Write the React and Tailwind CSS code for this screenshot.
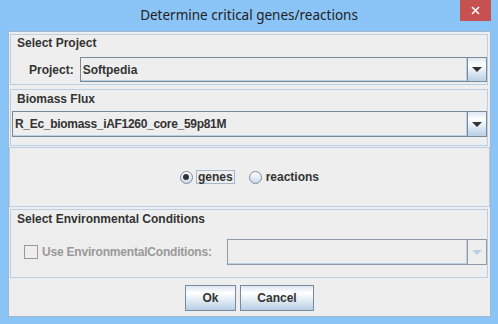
const btnGrad = "bg-[linear-gradient(to_bottom,#dde8f3_0%,#ffffff_30%,#b8cfe5_100%)]";

function Arrow({ disabled }) {
  return (
    <svg width="10" height="5" viewBox="0 0 10 5">
      <polygon points="0,0 10,0 5,5" fill={disabled ? "#b8cfe5" : "#333333"} />
    </svg>
  );
}

function Combo({ text, disabled, className = "", textClass = "" }) {
  return (
    <div className={`flex border ${disabled ? "border-[#8e9aa6]" : "border-[#7a8a99]"} bg-[#eeeeee] ${className}`}>
      <div className={`flex-1 flex items-center pl-[2px] shadow-[inset_-1px_-1px_0_#b8cfe5] text-[#333333] ${textClass}`}>
        {text}
      </div>
      <div
        className={`w-[19px] flex items-center justify-center border-l ${
          disabled ? "border-[#9a9a9a] bg-[#eeeeee]" : `border-[#7a8a99] ${btnGrad}`
        }`}
      >
        <Arrow disabled={disabled} />
      </div>
    </div>
  );
}

function Radio({ checked }) {
  return (
    <div className="w-[13px] h-[13px] rounded-full border border-[#7a8a99] bg-[linear-gradient(to_bottom,#ffffff,#c9dbee)] flex items-center justify-center">
      {checked && <div className="w-[6px] h-[6px] rounded-full bg-[#333333]" />}
    </div>
  );
}

export default function App() {
  return (
    <div className="w-[498px] h-[324px] bg-[#8bc4f6] flex flex-col overflow-hidden font-['Liberation_Sans',Arial,sans-serif] text-[12px] leading-[14px] font-bold text-[#333333]">
      {/* Title bar */}
      <div className="relative h-[31px] flex items-center justify-center pb-[2px]">
        <span className="font-['Noto_Sans',sans-serif] font-normal text-[13.5px] text-[#222222]">
          Determine critical genes/reactions
        </span>
        <div className="absolute top-0 right-[7px] w-[31px] h-[21px] bg-[#c75050] flex items-center justify-center">
          <svg width="9" height="9" viewBox="0 0 9 9">
            <path d="M1 1 L8 8 M8 1 L1 8" stroke="#ffffff" strokeWidth="1.6" />
          </svg>
        </div>
      </div>

      {/* Content */}
      <div className="ml-[8px] w-[483px] h-[286px] border border-[#9fb8d0] bg-[#eeeeee] flex flex-col">
        {/* Select Project */}
        <div className="ml-[1px] mt-[2px] w-[478px] h-[51px] border border-[#b8cfe5] flex flex-col">
          <div className="pl-[6px] pt-[1px]">Select Project</div>
          <div className="mt-[7px] flex items-center pl-[18px]">
            <span className="mr-[6px]">Project:</span>
            <Combo text="Softpedia" className="flex-1 h-[25px]" />
          </div>
        </div>

        {/* Biomass Flux */}
        <div className="ml-[1px] mt-[4px] w-[478px] h-[57px] border border-[#b8cfe5] flex flex-col">
          <div className="pl-[6px] pt-[2px]">Biomass Flux</div>
          <div className="mt-[5px] pl-[1px]">
            <Combo
              text="R_Ec_biomass_iAF1260_core_59p81M"
              textClass="tracking-[-0.3px]"
              className="h-[26px]"
            />
          </div>
        </div>

        {/* Radio panel */}
        <div className="mt-[1px] h-[60px] border border-[#b8cfe5] flex items-center justify-center">
          <Radio checked />
          <span className="ml-[3px] px-[1px] border border-[#a3b8cc] leading-[12px]">genes</span>
          <span className="ml-[14px]">
            <Radio />
          </span>
          <span className="ml-[4px]">reactions</span>
        </div>

        {/* Environmental conditions */}
        <div className="ml-[1px] mt-[2px] w-[478px] h-[69px] border border-[#b8cfe5] flex flex-col">
          <div className="pl-[6px] pt-[2px]">Select Environmental Conditions</div>
          <div className="mt-[13px] flex items-center pl-[13px]">
            <div className="w-[14px] h-[14px] border border-[#9a9a9a] bg-[#eeeeee]" />
            <span className="ml-[4px] text-[#999999] tracking-[-0.2px]">Use EnvironmentalConditions:</span>
            <Combo text="" disabled className="ml-[15px] flex-1 h-[26px]" />
          </div>
        </div>

        {/* Buttons */}
        <div className="mt-[7px] flex justify-center gap-[4px]">
          <div className={`w-[51px] h-[26px] border border-[#7a8a99] ${btnGrad} flex items-center justify-center`}>
            Ok
          </div>
          <div className={`w-[74px] h-[26px] border border-[#7a8a99] ${btnGrad} flex items-center justify-center`}>
            Cancel
          </div>
        </div>
      </div>
    </div>
  );
}
